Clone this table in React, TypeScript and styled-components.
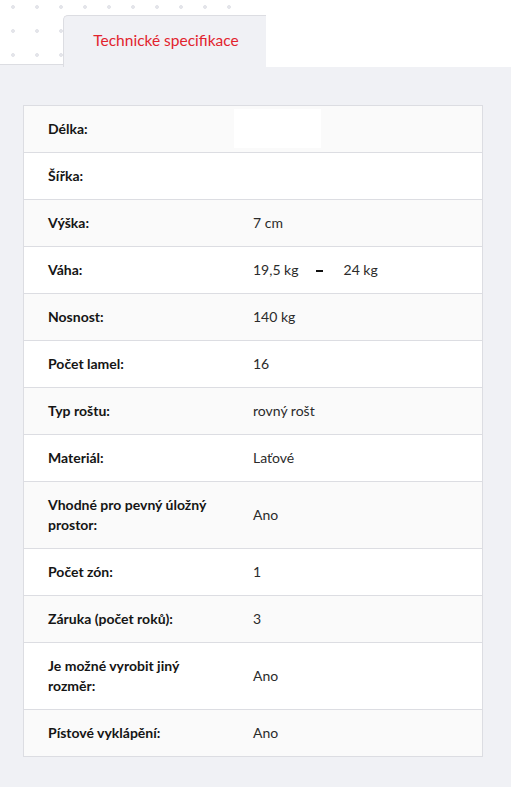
import React from "react";
import styled, { createGlobalStyle } from "styled-components";

const GlobalStyle = createGlobalStyle`
  html, body { margin: 0; padding: 0; }
  body {
    background: #f0f1f5;
    font-family: Lato, "Noto Sans", "DejaVu Sans", sans-serif;
    -webkit-font-smoothing: antialiased;
  }
  * { box-sizing: border-box; }
`;

const dots = `radial-gradient(circle at 12px 12px, #e4e5ea 1.6px, transparent 2.2px)`;

const Page = styled.div`
  width: 511px;
  min-height: 787px;
  background: #f0f1f5;
`;

const Header = styled.div`
  display: flex;
  align-items: flex-start;
  height: 67px;
`;

const LeftFiller = styled.div`
  width: 63px;
  height: 65px;
  background-color: #fff;
  background-image: ${dots};
  background-size: 24px 24px;
  background-position: 1px -5px;
  border-bottom: 1px solid #dcdde2;
`;

const TabSlot = styled.div`
  width: 203px;
  height: 67px;
  padding-top: 15px;
  background-color: #fff;
  background-image: linear-gradient(to right, transparent 178px, #fff 178px), ${dots};
  background-size: 100% 100%, 24px 24px;
  background-repeat: no-repeat, repeat;
  background-position: 0 0, 10px -5px;
`;

const Tab = styled.div`
  height: 52px;
  background: #f0f1f5;
  border-top: 1px solid #dcdde2;
  border-left: 1px solid #dcdde2;
  border-top-left-radius: 5px;
  display: flex;
  align-items: center;
  justify-content: center;
  padding: 0 0 3px 2px;
  color: #e2232d;
  font-size: 15.5px;
`;

const RightFiller = styled.div`
  flex: 1;
  height: 67px;
  background: #fff;
`;

const Content = styled.div`
  padding: 38px 28px 31px 23px;
`;

const Table = styled.div`
  border: 1px solid #dcdde2;
  border-bottom: none;
`;

const Row = styled.div<{ $alt: boolean }>`
  display: grid;
  grid-template-columns: 205px 1fr;
  align-items: center;
  min-height: 47px;
  padding: 13px 0;
  border-bottom: 1px solid #dcdde2;
  background: ${(p) => (p.$alt ? "#fafafa" : "#ffffff")};
  line-height: 20px;
  font-size: 14px;
`;

const Label = styled.div`
  padding: 0 10px 0 24px;
  font-weight: 700;
  color: #151515;
`;

const Value = styled.div`
  padding-left: 24px;
  color: #2b2b2b;
  display: flex;
  align-items: center;
`;

const Placeholder = styled.div`
  margin: -10px 0 -9px -19px;
  width: 87px;
  height: 39px;
  background: #ffffff;
`;

const Dash = styled.span`
  display: inline-block;
  width: 7px;
  height: 2px;
  background: #111;
  margin: 1px 21px 0 17px;
`;

type Spec = { label: string; value?: React.ReactNode };

const specs: Spec[] = [
  { label: "Délka:", value: <Placeholder /> },
  { label: "Šířka:" },
  { label: "Výška:", value: "7 cm" },
  {
    label: "Váha:",
    value: (
      <>
        <span>19,5 kg</span>
        <Dash />
        <span>24 kg</span>
      </>
    ),
  },
  { label: "Nosnost:", value: "140 kg" },
  { label: "Počet lamel:", value: "16" },
  { label: "Typ roštu:", value: "rovný rošt" },
  { label: "Materiál:", value: "Laťové" },
  { label: "Vhodné pro pevný úložný prostor:", value: "Ano" },
  { label: "Počet zón:", value: "1" },
  { label: "Záruka (počet roků):", value: "3" },
  { label: "Je možné vyrobit jiný rozměr:", value: "Ano" },
  { label: "Pístové vyklápění:", value: "Ano" },
];

export default function App() {
  return (
    <Page>
      <GlobalStyle />
      <Header>
        <LeftFiller />
        <TabSlot>
          <Tab>Technické specifikace</Tab>
        </TabSlot>
        <RightFiller />
      </Header>
      <Content>
        <Table>
          {specs.map((s, i) => (
            <Row key={s.label} $alt={i % 2 === 0}>
              <Label>{s.label}</Label>
              <Value>{s.value}</Value>
            </Row>
          ))}
        </Table>
      </Content>
    </Page>
  );
}
